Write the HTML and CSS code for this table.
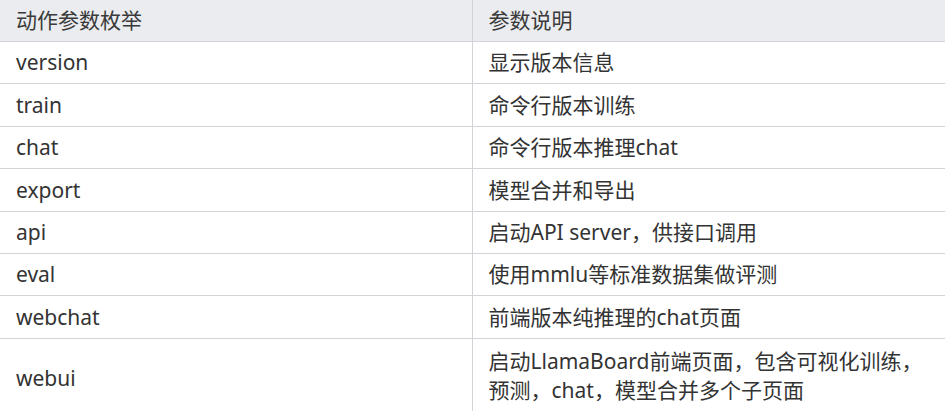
FILE: index.html
```html
<!DOCTYPE html>
<html lang="zh-CN">
<head>
<meta charset="utf-8">
<title>动作参数枚举</title>
<link rel="stylesheet" href="styles.css">
</head>
<body>
<table class="params">
  <colgroup><col class="col-action"><col class="col-desc"></colgroup>
  <thead>
    <tr><th>动作参数枚举</th><th>参数说明</th></tr>
  </thead>
  <tbody>
    <tr><td>version</td><td>显示版本信息</td></tr>
    <tr><td>train</td><td>命令行版本训练</td></tr>
    <tr><td>chat</td><td>命令行版本推理chat</td></tr>
    <tr><td>export</td><td>模型合并和导出</td></tr>
    <tr><td>api</td><td>启动API server，供接口调用</td></tr>
    <tr><td>eval</td><td>使用mmlu等标准数据集做评测</td></tr>
    <tr><td>webchat</td><td>前端版本纯推理的chat页面</td></tr>
    <tr class="tall"><td>webui</td><td>启动LlamaBoard前端页面，包含可视化训练，<br>预测，chat，模型合并多个子页面</td></tr>
  </tbody>
</table>
</body>
</html>
```

FILE: styles.css
```css
html, body {
  margin: 0;
  padding: 0;
  background: #ffffff;
  overflow: hidden;
}

.params {
  border-collapse: collapse;
  table-layout: fixed;
  width: 945px;
  font-family: "Noto Sans", "Noto Sans CJK SC", sans-serif;
  font-size: 21px;
  line-height: 28.5px;
  color: #333333;
}

.col-action { width: 472px; }

.params th,
.params td {
  text-align: left;
  font-weight: normal;
  padding: 6.45px 16px;
  border-bottom: 1px solid #d2d3d8;
  vertical-align: middle;
  white-space: nowrap;
}

.params th {
  padding-top: 6.25px;
  padding-bottom: 6.25px;
}

.params th:first-child,
.params td:first-child {
  border-right: 1px solid #d2d3d8;
}

.params thead th {
  background: #ebecef;
  color: #3a3a3a;
}

.params tr.tall td {
  padding-top: 8.5px;
  padding-bottom: 14px;
}

.params tr.tall td:first-child {
  padding-bottom: 8.5px;
}
```
